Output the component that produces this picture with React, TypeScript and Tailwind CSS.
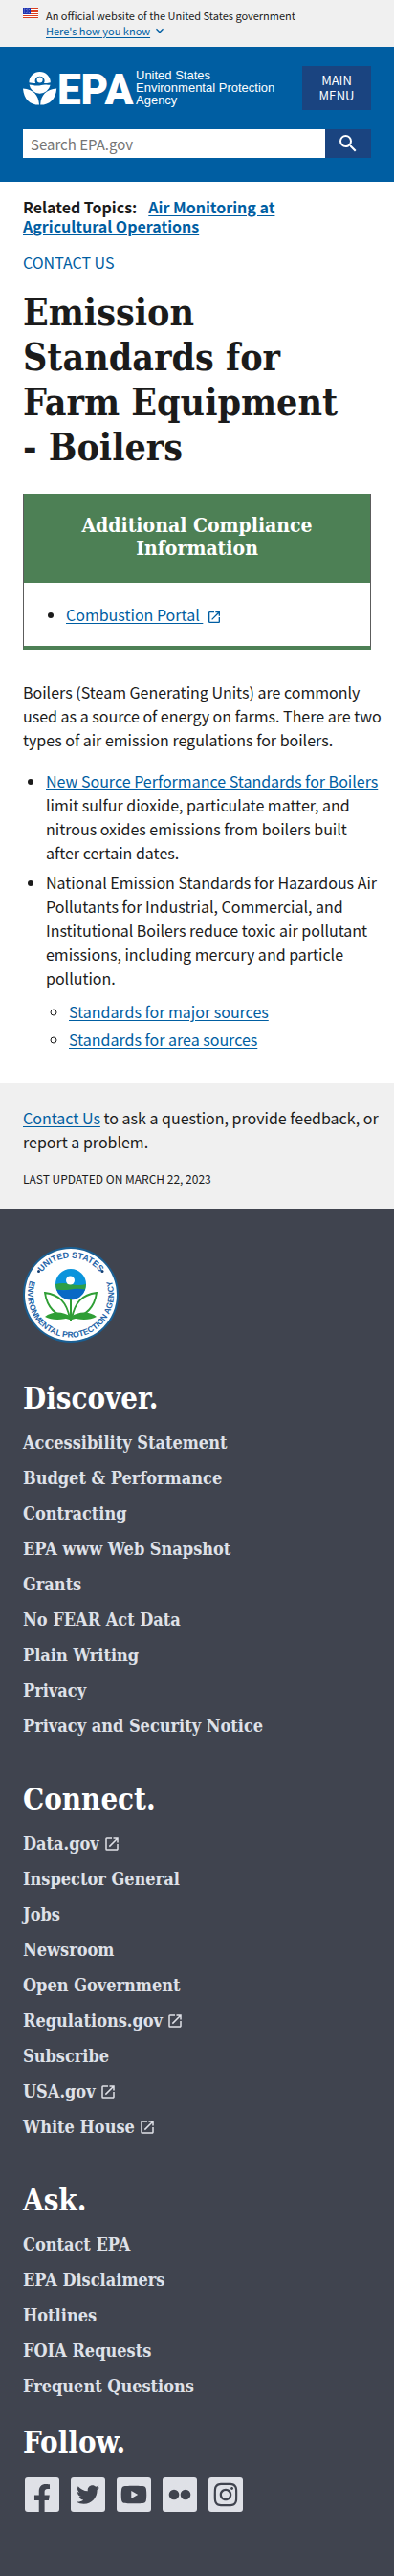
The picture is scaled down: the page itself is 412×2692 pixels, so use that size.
import React from "react";
import { MdOpenInNew, MdSearch, MdExpandMore } from "react-icons/md";
import { FaFacebookF, FaTwitter, FaYoutube, FaInstagram } from "react-icons/fa";

const sans = "font-['Noto_Sans_CJK_SC','Noto_Sans',sans-serif]";
const serif = "font-['DejaVu_Serif_Condensed','DejaVu_Serif',serif]";

function Flag() {
  return (
    <svg viewBox="0 0 16 11" className="mt-2 h-[11px] w-4 shrink-0" aria-hidden="true">
      <rect width="16" height="11" fill="#fff" />
      {[0, 2, 4, 6, 8, 10].map((y) => (
        <rect key={y} y={y} width="16" height="1" fill="#db3e1f" />
      ))}
      <rect width="8" height="7" fill="#1e33b1" />
      {[1, 3, 5].map((y) => (
        <g key={y} fill="#fff">
          <circle cx="1.5" cy={y} r="0.4" />
          <circle cx="3.2" cy={y + 0.6} r="0.4" />
          <circle cx="4.9" cy={y} r="0.4" />
          <circle cx="6.6" cy={y + 0.6} r="0.4" />
        </g>
      ))}
    </svg>
  );
}

function Logo() {
  return (
    <svg viewBox="0 0 270 42" className="h-[42px] w-[270px] overflow-visible" role="img" aria-label="EPA logo">
      <g fill="#fff">
        <path d="M6.4 13.2a11.2 11.2 0 0 1 22.4 0c-1.8 0-2.8.8-5.4.8h-1.4a5 5 0 1 0-8.8 0c-3 0-4.6-.8-6.8-.8z" />
        <circle cx="17.6" cy="10.6" r="3" />
        <path d="M6.6 15.4c3.4 0 4.6 1.2 8.2 1.2s5.4-1.2 8.2-1.2 3.4.4 5.6.4a11.2 11.2 0 0 1-22-.4z" />
        <path d="M0 19.4c10.5 1 16.4 6.2 17 17.2-9.8 0-16-5.8-17-17.2z" />
        <path d="M35.2 19.4c-10.5 1-16.4 6.2-17 17.2 9.8 0 16-5.8 17-17.2z" />
        <text x="36" y="36" fontSize="44" fontWeight="900" className="font-['Roboto',sans-serif]">EPA</text>
        <g fontSize="13" className="font-['Liberation_Sans',sans-serif]">
          <text x="118" y="10">United States</text>
          <text x="118" y="23">Environmental Protection</text>
          <text x="118" y="36">Agency</text>
        </g>
      </g>
    </svg>
  );
}

function Seal() {
  return (
    <svg viewBox="0 0 100 100" className="h-[100px] w-[100px]" role="img" aria-label="EPA seal">
      <defs>
        <path id="sealTop" d="M11.5 50a38.5 38.5 0 0 1 77 0" />
        <path id="sealBottom" d="M18 18a45 45 0 1 0 64 0" />
      </defs>
      <circle cx="50" cy="50" r="50" fill="#1a5f93" />
      <circle cx="50" cy="50" r="48" fill="#fff" />
      <g fontWeight="700" fill="#2464a8" className="font-['Liberation_Sans',sans-serif]">
        <text textAnchor="middle" fontSize="9">
          <textPath href="#sealTop" startOffset="50%">UNITED STATES</textPath>
        </text>
        <text textAnchor="middle" fontSize="8.5">
          <textPath href="#sealBottom" startOffset="50%">ENVIRONMENTAL PROTECTION AGENCY</textPath>
        </text>
      </g>
      <circle cx="16.5" cy="25.5" r="1.5" fill="#123e73" />
      <circle cx="83" cy="25.5" r="1.5" fill="#123e73" />
      <circle cx="50" cy="39" r="16" fill="#0a94dc" />
      <path d="M34 39q8-2 16 0t16 0l-1 6H35z" fill="#2e9f45" />
      <path d="M34.8 44.5q8 1.5 15 0t15.4 0a16 16 0 0 1-30.4 0z" fill="#0869c5" />
      <circle cx="49.5" cy="35" r="4.5" fill="#fff" />
      <g stroke="#2f9e35" strokeWidth="1.8" fill="#fff">
        <path d="M49 75C46 58 38 50 23 48c2 14 10 24 26 27z" />
        <path d="M51 75c3-17 11-25 26-27-2 14-10 24-26 27z" />
      </g>
      <path d="M50 73c-8-6-20-6-27 0 7 4 19 4 27 0zm0 0c8-6 20-6 27 0-7 4-19 4-27 0z" fill="#2f9e35" />
      <path d="M50 55v22" stroke="#2f9e35" strokeWidth="2" />
    </svg>
  );
}

type FooterLink = { label: string; external?: boolean };

const footerGroups: { title: string; links: FooterLink[] }[] = [
  {
    title: "Discover.",
    links: [
      { label: "Accessibility Statement" },
      { label: "Budget & Performance" },
      { label: "Contracting" },
      { label: "EPA www Web Snapshot" },
      { label: "Grants" },
      { label: "No FEAR Act Data" },
      { label: "Plain Writing" },
      { label: "Privacy" },
      { label: "Privacy and Security Notice" },
    ],
  },
  {
    title: "Connect.",
    links: [
      { label: "Data.gov", external: true },
      { label: "Inspector General" },
      { label: "Jobs" },
      { label: "Newsroom" },
      { label: "Open Government" },
      { label: "Regulations.gov", external: true },
      { label: "Subscribe" },
      { label: "USA.gov", external: true },
      { label: "White House", external: true },
    ],
  },
  {
    title: "Ask.",
    links: [
      { label: "Contact EPA" },
      { label: "EPA Disclaimers" },
      { label: "Hotlines" },
      { label: "FOIA Requests" },
      { label: "Frequent Questions" },
    ],
  },
];

function FooterHeading({ children }: { children: React.ReactNode }) {
  return <h2 className={`${serif} text-[31px] leading-[40px] font-bold text-white`}>{children}</h2>;
}

function Social({ label, children }: { label: string; children: React.ReactNode }) {
  return (
    <a
      href="#"
      aria-label={label}
      className="flex h-9 w-9 items-center justify-center overflow-hidden rounded-[3px] bg-[#dfe1e7] text-[#40444f]"
    >
      {children}
    </a>
  );
}

const link = "text-[#005ea2] underline underline-offset-2";

export default function App() {
  return (
    <div className={`${sans} bg-white text-[16px] leading-[25px] text-[#1b1b1b]`}>
      <section className="flex gap-2 bg-[#f0f0f0] px-6 pb-[9px] text-[11px] leading-4" aria-label="Official website">
        <Flag />
        <div className="pt-2">
          <p>An official website of the United States government</p>
          <button type="button" className="flex items-center text-[#005ea2]">
            <span className="underline underline-offset-2">Here's how you know</span>
            <MdExpandMore className="ml-0.5 size-4" />
          </button>
        </div>
      </section>

      <header className="bg-[#005ea2] px-6 pt-5 pb-[25px]">
        <div className="flex items-start justify-between">
          <a href="#" className="pt-1">
            <Logo />
          </a>
          <button type="button" className="w-[72px] shrink-0 bg-[#1a4480] px-2 py-[7px] text-[13px] leading-4 text-white">
            MAIN MENU
          </button>
        </div>
        <form className="mt-5 flex h-[30px]" role="search">
          <input
            type="search"
            aria-label="Search EPA.gov"
            placeholder="Search EPA.gov"
            className="min-w-0 flex-1 bg-white px-2 text-[15px] placeholder:text-[#757575]"
          />
          <button type="button" aria-label="Search" className="flex w-12 items-center justify-center bg-[#1a4480] text-white">
            <MdSearch className="size-6" />
          </button>
        </form>
      </header>

      <main className="pt-4 pr-3 pb-[33px] pl-6">
        <p className="pr-9 leading-5 font-bold">
          Related Topics:
          <a href="#" className={`${link} ml-3`}>Air Monitoring at Agricultural Operations</a>
        </p>
        <p className="mt-4">
          <a href="#" className="text-[#005ea2]">CONTACT US</a>
        </p>
        <h1 className={`${serif} mt-4 pr-9 text-[39px] leading-[47px] font-bold`}>Emission Standards for Farm Equipment - Boilers</h1>

        <section className="mt-[25px] mr-3 border-x border-b-4 border-x-[#5c5c5c] border-b-[#4d8055] bg-white">
          <h2 className={`${serif} bg-[#4d8055] px-6 pt-[21px] pb-6 text-center text-[21px] leading-6 font-bold text-white`}>
            Additional Compliance Information
          </h2>
          <ul className="list-disc pt-[21px] pb-5 pl-11">
            <li>
              <a href="#" className={link}>Combustion Portal&nbsp;</a>
              <MdOpenInNew className="ml-1 inline size-4 text-[#005ea2]" />
            </li>
          </ul>
        </section>

        <p className="mt-8">
          Boilers (Steam Generating Units) are commonly used as a source of energy on farms. There are two types of air
          emission regulations for boilers.
        </p>
        <ul className="mt-[18px] list-disc space-y-1.5 pr-1 pl-6">
          <li>
            <a href="#" className={link}>New Source Performance Standards for Boilers</a> limit sulfur dioxide,
            particulate matter, and nitrous oxides emissions from boilers built after certain dates.
          </li>
          <li>
            National Emission Standards for Hazardous Air Pollutants for Industrial, Commercial, and Institutional
            Boilers reduce toxic air pollutant emissions, including mercury and particle pollution.
            <ul className="mt-2.5 list-[circle] space-y-1 pl-6">
              <li>
                <a href="#" className={link}>Standards for major sources</a>
              </li>
              <li>
                <a href="#" className={link}>Standards for area sources</a>
              </li>
            </ul>
          </li>
        </ul>
      </main>

      <section className="bg-[#f0f0f0] pt-6 pr-3 pb-[23px] pl-6">
        <p>
          <a href="#" className={link}>Contact Us</a> to ask a question, provide feedback, or report a problem.
        </p>
        <p className="mt-[18px] text-[12px] leading-4">LAST UPDATED ON MARCH 22, 2023</p>
      </section>

      <footer className="bg-[#40444f] px-6 pt-10 pb-[67px]">
        <Seal />
        <div className="mt-[38px] flex flex-col gap-[46px]">
          {footerGroups.map((group) => (
            <nav key={group.title} aria-label={group.title}>
              <FooterHeading>{group.title}</FooterHeading>
              <ul className={`${serif} mt-4 flex flex-col gap-4 text-[18px] leading-[21px] font-bold text-[#dfe1e8]`}>
                {group.links.map((item) => (
                  <li key={item.label}>
                    <a href="#" className="flex items-center gap-1">
                      {item.label}
                      {item.external && <MdOpenInNew className="size-[18px]" />}
                    </a>
                  </li>
                ))}
              </ul>
            </nav>
          ))}
        </div>
        <div className="mt-7">
          <FooterHeading>Follow.</FooterHeading>
          <div className="mt-[17px] flex gap-3 pl-0.5">
            <Social label="Facebook">
              <FaFacebookF className="mt-2 size-[30px]" />
            </Social>
            <Social label="Twitter">
              <FaTwitter className="size-6" />
            </Social>
            <Social label="YouTube">
              <FaYoutube className="size-7" />
            </Social>
            <Social label="Flickr">
              <svg viewBox="0 0 24 12" className="h-3 w-6" fill="currentColor" aria-hidden="true">
                <circle cx="6" cy="6" r="5.3" />
                <circle cx="18" cy="6" r="5.3" />
              </svg>
            </Social>
            <Social label="Instagram">
              <FaInstagram className="size-7" />
            </Social>
          </div>
        </div>
      </footer>
    </div>
  );
}
